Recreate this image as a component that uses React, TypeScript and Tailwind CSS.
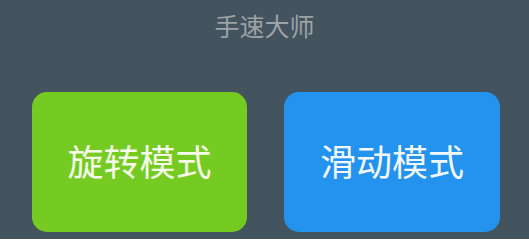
export default function App() {
	return (
		<div
			className="flex h-[239px] w-[529px] flex-col bg-[#44545f]"
			style={{ fontFamily: '"Noto Sans CJK SC", "Noto Sans", sans-serif' }}
		>
			<h1 className="pt-[7px] text-center text-[25px] font-normal leading-[36px] text-[#9ca2a6]">手速大师</h1>
			<div className="mt-[49px] flex gap-[37px] pl-[32px]">
				<button className="flex h-[140px] w-[215px] items-center justify-center rounded-[15px] bg-[#76cb23] pb-[4px] text-[36px] text-[#f4fbe9]">
					旋转模式
				</button>
				<button className="flex h-[140px] w-[216px] items-center justify-center rounded-[15px] bg-[#2393ee] pb-[4px] text-[36px] text-[#f2f8fe]">
					滑动模式
				</button>
			</div>
		</div>
	);
}
